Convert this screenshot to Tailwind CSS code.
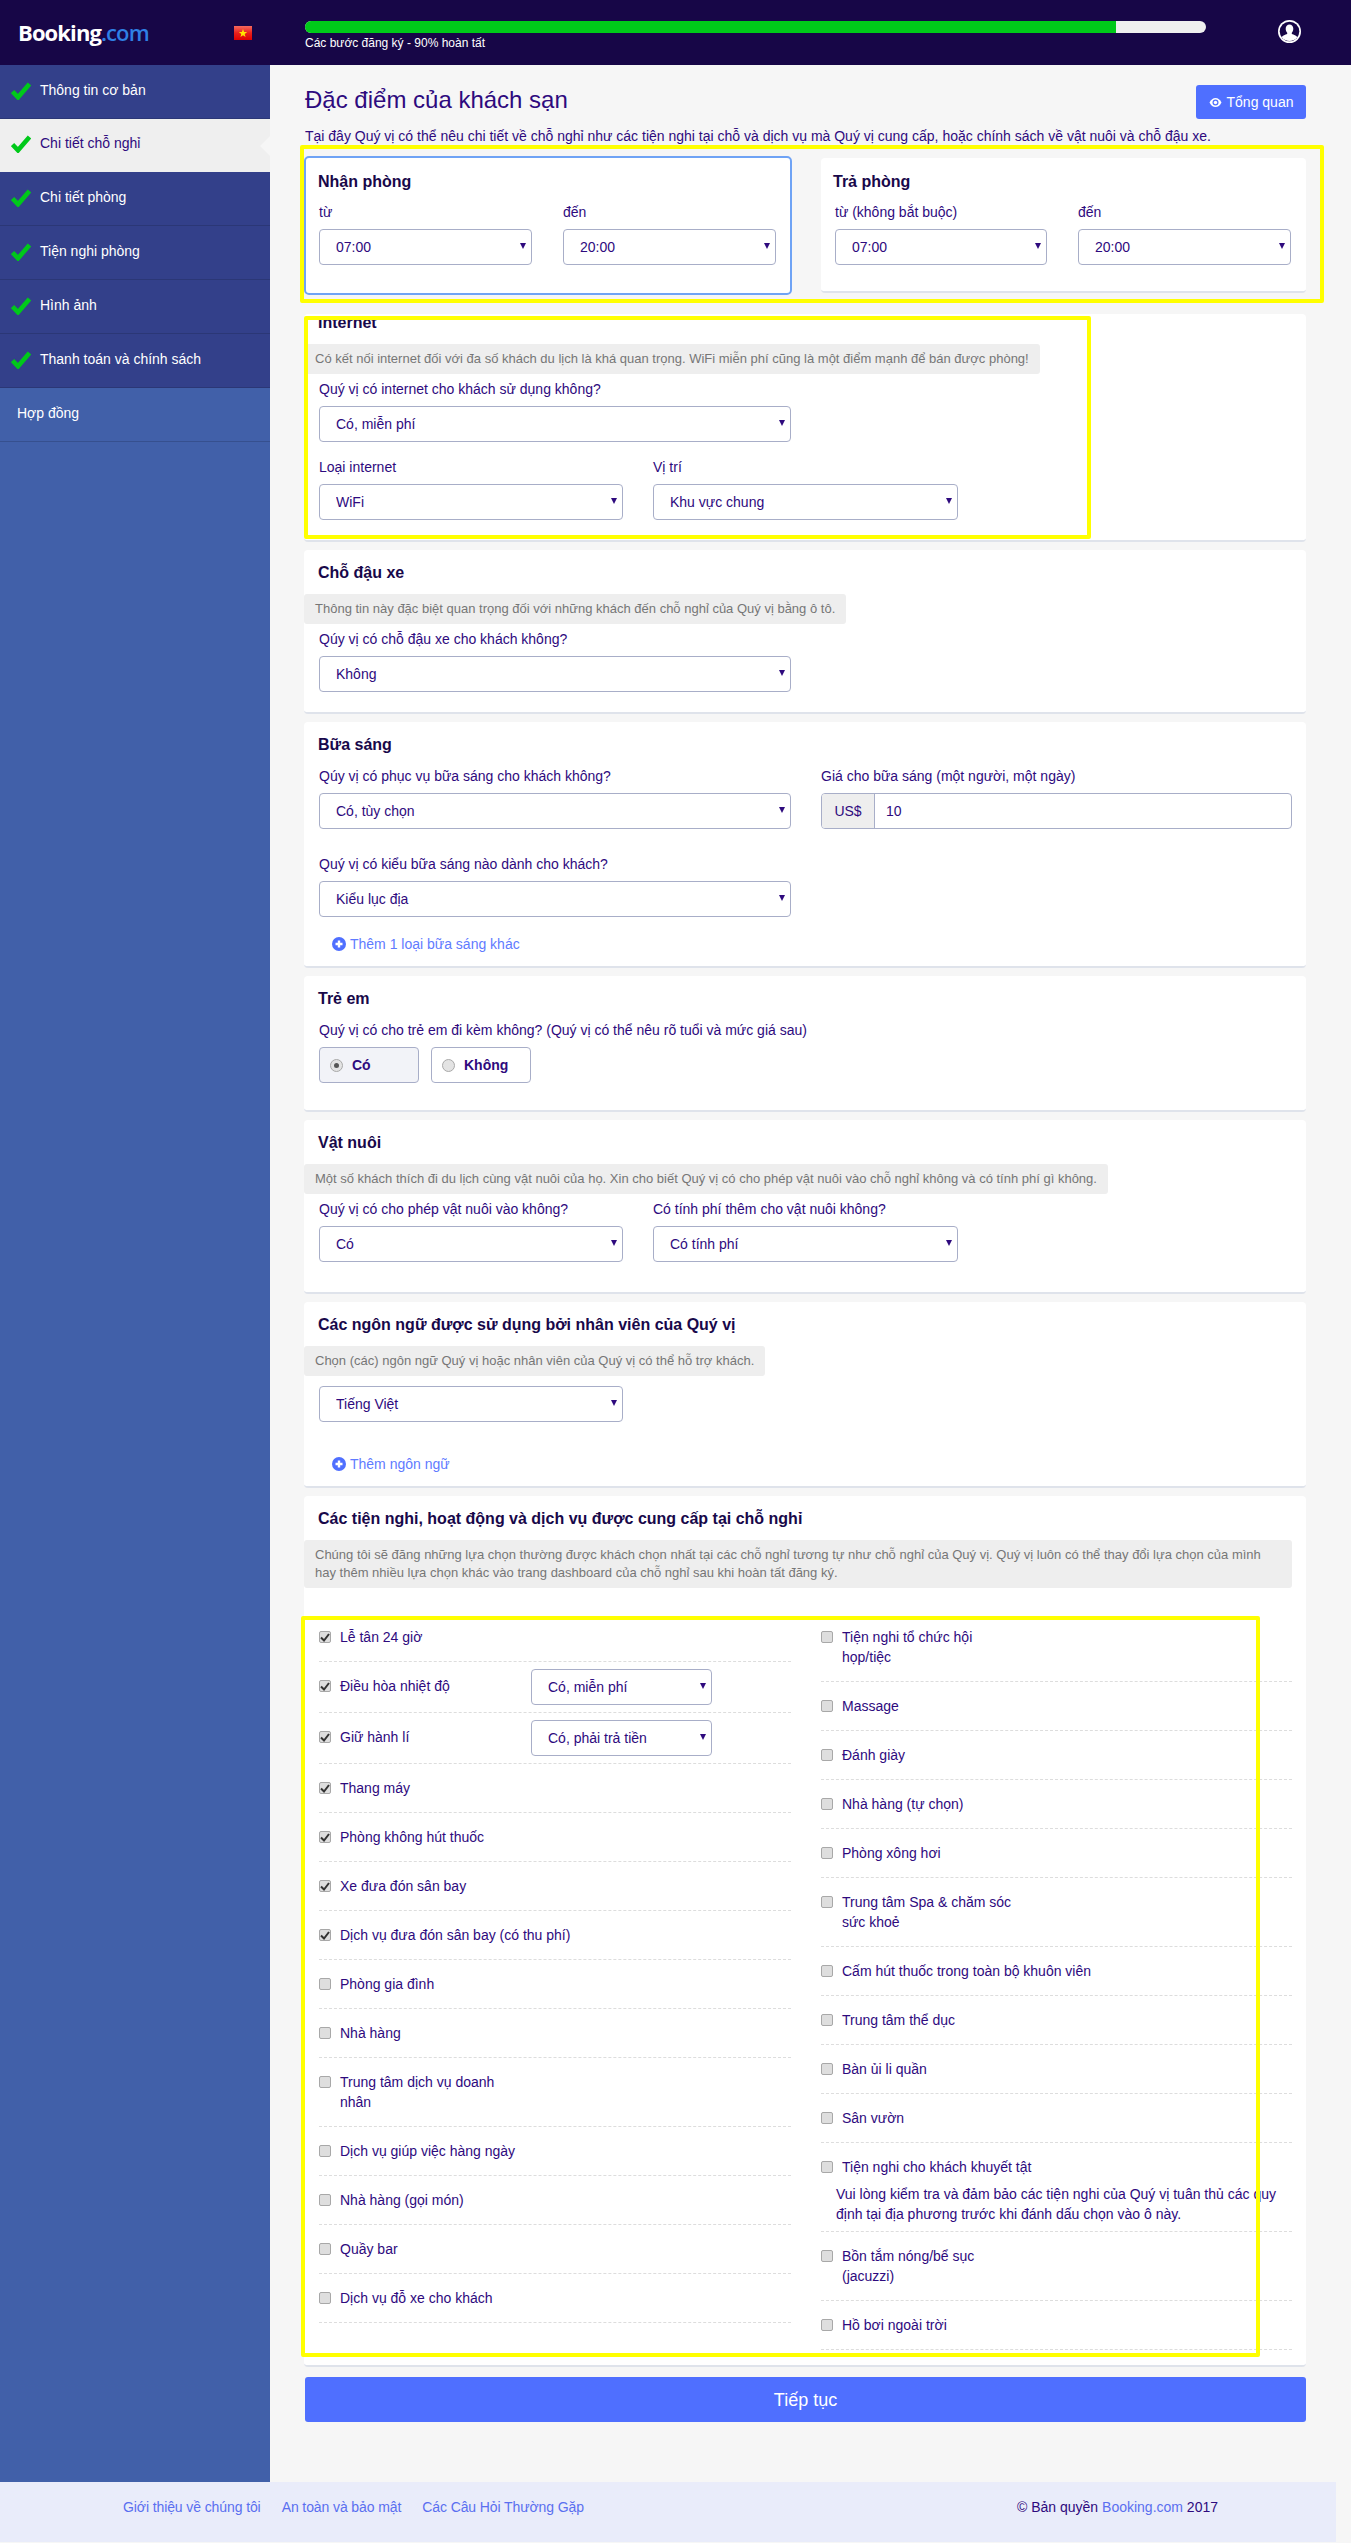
<!DOCTYPE html>
<html>
  <head>
    <meta charset="UTF-8" />
    <meta name="viewport" content="width=device-width, initial-scale=1.0" />
    <title>Đặc điểm của khách sạn</title>
    <script src="https://cdn.jsdelivr.net/npm/@tailwindcss/browser@4"></script>
  </head>
  <body class="relative flex flex-col w-[1351px] h-[2543px] bg-[#f6f6f6] font-['Liberation_Sans',Arial,sans-serif] text-[14px] leading-[20px] text-[#2e0a7e] overflow-hidden">
    <!-- header -->
    <header class="flex items-start h-[65px] bg-[#170647] shrink-0">
      <div class="w-[234px] shrink-0 pl-[18px] pt-[17px] font-['Open_Sans',sans-serif] font-bold text-[22px] leading-[30px] tracking-[-0.9px] text-white">Booking<span class="text-[#2f80e4] font-semibold">.com</span></div>
      <svg class="w-[18px] h-[14px] mt-[26px] shrink-0" viewBox="0 0 18 14">
        <defs><linearGradient id="fl" x1="0" y1="0" x2="0" y2="1"><stop offset="0" stop-color="#f56a5e"/><stop offset=".5" stop-color="#e8201c"/><stop offset="1" stop-color="#e00000"/></linearGradient></defs>
        <rect width="18" height="14" fill="url(#fl)"/>
        <path d="M9 3l1.100 3h3.100l-2.500 1.900.9 3.100L9 9.200 6.400 11l.9-3.100L4.800 6h3.100z" fill="#ffe600"/>
      </svg>
      <div class="w-[901px] ml-[53px] pt-[21px] shrink-0">
        <div class="h-[12px] bg-[#efefef] rounded-[6px] overflow-hidden"><div class="h-full w-[811px] bg-[#00c91a]"></div></div>
        <div class="mt-[1px] text-[12px] leading-[18px] text-white">Các bước đăng ký - 90% hoàn tất</div>
      </div>
      <svg class="w-[23px] h-[23px] ml-[72px] mt-[20px] shrink-0" viewBox="0 0 23 23">
        <circle cx="11.500" cy="11.500" r="11.500" fill="#fff"/>
        <circle cx="11.500" cy="11.500" r="9.800" fill="#170647"/>
        <path d="M11.500 4.500c2.300 0 3.800 1.800 3.800 4.300 0 1.700-.7 3.100-1.500 3.900v1.300c2 .7 4.500 1.500 5.500 3.200a9.800 9.800 0 0 1-15.600 0c1-1.700 3.500-2.500 5.500-3.200v-1.300c-.8-.8-1.500-2.200-1.500-3.900 0-2.500 1.500-4.300 3.800-4.300z" fill="#fff"/>
      </svg>
    </header>

    <div class="flex flex-1">
      <!-- sidebar -->
      <aside class="w-[270px] shrink-0 bg-[#4160a9] text-white">
        <a class="flex items-start h-[54px] bg-[#33408a] border-b border-[#2b3776] pl-[11px] pt-[15px] gap-[9px]"><svg class="w-[20px] h-[18px] mt-[2px]" viewBox="0 0 20 18"><path d="M1.500 9.500l5.500 5.800L18.500 2" fill="none" stroke="#00c91a" stroke-width="4.600"/></svg>Thông tin cơ bản</a>
        <a class="relative flex items-start h-[53px] bg-[#efefef] text-[#2e0a7e] pl-[11px] pt-[14px] gap-[9px]"><svg class="w-[20px] h-[18px] mt-[2px]" viewBox="0 0 20 18"><path d="M1.500 9.500l5.500 5.800L18.500 2" fill="none" stroke="#00c91a" stroke-width="4.600"/></svg>Chi tiết chỗ nghỉ<span class="absolute right-0 top-[17px] border-y-[10px] border-r-[10px] border-y-transparent border-r-[#f6f6f6]"></span></a>
        <a class="flex items-start h-[54px] bg-[#33408a] border-b border-[#2b3776] pl-[11px] pt-[15px] gap-[9px]"><svg class="w-[20px] h-[18px] mt-[2px]" viewBox="0 0 20 18"><path d="M1.500 9.500l5.500 5.800L18.500 2" fill="none" stroke="#00c91a" stroke-width="4.600"/></svg>Chi tiết phòng</a>
        <a class="flex items-start h-[54px] bg-[#33408a] border-b border-[#2b3776] pl-[11px] pt-[15px] gap-[9px]"><svg class="w-[20px] h-[18px] mt-[2px]" viewBox="0 0 20 18"><path d="M1.500 9.500l5.500 5.800L18.500 2" fill="none" stroke="#00c91a" stroke-width="4.600"/></svg>Tiện nghi phòng</a>
        <a class="flex items-start h-[54px] bg-[#33408a] border-b border-[#2b3776] pl-[11px] pt-[15px] gap-[9px]"><svg class="w-[20px] h-[18px] mt-[2px]" viewBox="0 0 20 18"><path d="M1.500 9.500l5.500 5.800L18.500 2" fill="none" stroke="#00c91a" stroke-width="4.600"/></svg>Hình ảnh</a>
        <a class="flex items-start h-[54px] bg-[#33408a] border-b border-[#2b3776] pl-[11px] pt-[15px] gap-[9px]"><svg class="w-[20px] h-[18px] mt-[2px]" viewBox="0 0 20 18"><path d="M1.500 9.500l5.500 5.800L18.500 2" fill="none" stroke="#00c91a" stroke-width="4.600"/></svg>Thanh toán và chính sách</a>
        <a class="block h-[54px] border-b border-[#36508f] pl-[17px] pt-[15px]">Hợp đồng</a>
      </aside>

      <!-- main -->
      <main class="flex-1 pl-[34px] pr-[45px] pt-[20px]">
        <div class="flex justify-between items-start pl-px">
          <h1 class="text-[24px] leading-[30px]">Đặc điểm của khách sạn</h1>
          <button class="flex items-center justify-center gap-[5px] w-[110px] h-[34px] rounded-[3px] bg-[#4f6fff] text-white">
            <svg class="w-[13px] h-[11px]" viewBox="0 0 13 11"><path d="M.5 5.500C2 2.500 4 1 6.500 1s4.500 1.500 6 4.500c-1.500 3-3.500 4.500-6 4.500S2 8.500.5 5.500z" fill="#fff"/><circle cx="6.500" cy="5.500" r="3" fill="#4f6fff"/><circle cx="6.500" cy="5.500" r="1.700" fill="#fff"/></svg>
            Tổng quan
          </button>
        </div>
        <p class="mt-[7px] pl-px">Tại đây Quý vị có thể nêu chi tiết về chỗ nghỉ như các tiện nghi tại chỗ và dịch vụ mà Quý vị cung cấp, hoặc chính sách về vật nuôi và chỗ đậu xe.</p>

        <!-- check in / out -->
        <div class="flex gap-[29px] mt-[10px]">
          <section class="w-[488px] h-[139px] bg-white border-2 border-[#6fa3f5] rounded-[5px] pl-[13px] pt-[14px]">
            <h2 class="-ml-px font-bold text-[16px] text-[#18084a]">Nhận phòng</h2>
            <div class="grid grid-cols-[213px_213px] gap-x-[31px] mt-[10px]">
              <div>
                <label class="block">từ</label>
                <div class="relative mt-[7px]"><select class="w-full h-[36px] appearance-none bg-white border border-[#a8aec8] rounded-[4px] pl-[16px]"><option>07:00</option></select><svg class="absolute right-[6px] top-[14px] w-[6px] h-[6px] pointer-events-none" viewBox="0 0 7 7"><path d="M0 0h7L3.500 7z" fill="#2e0a7e"/></svg></div>
              </div>
              <div>
                <label class="block">đến</label>
                <div class="relative mt-[7px]"><select class="w-full h-[36px] appearance-none bg-white border border-[#a8aec8] rounded-[4px] pl-[16px]"><option>20:00</option></select><svg class="absolute right-[6px] top-[14px] w-[6px] h-[6px] pointer-events-none" viewBox="0 0 7 7"><path d="M0 0h7L3.500 7z" fill="#2e0a7e"/></svg></div>
              </div>
            </div>
          </section>
          <section class="w-[485px] h-[135px] mt-[2px] bg-white border-b-2 border-[#dfe3eb] rounded-[4px] pl-[14px] pt-[14px]">
            <h2 class="-ml-[2px] font-bold text-[16px] text-[#18084a]">Trả phòng</h2>
            <div class="grid grid-cols-[212px_213px] gap-x-[31px] mt-[10px]">
              <div>
                <label class="block">từ (không bắt buộc)</label>
                <div class="relative mt-[7px]"><select class="w-full h-[36px] appearance-none bg-white border border-[#a8aec8] rounded-[4px] pl-[16px]"><option>07:00</option></select><svg class="absolute right-[6px] top-[14px] w-[6px] h-[6px] pointer-events-none" viewBox="0 0 7 7"><path d="M0 0h7L3.500 7z" fill="#2e0a7e"/></svg></div>
              </div>
              <div>
                <label class="block">đến</label>
                <div class="relative mt-[7px]"><select class="w-full h-[36px] appearance-none bg-white border border-[#a8aec8] rounded-[4px] pl-[16px]"><option>20:00</option></select><svg class="absolute right-[6px] top-[14px] w-[6px] h-[6px] pointer-events-none" viewBox="0 0 7 7"><path d="M0 0h7L3.500 7z" fill="#2e0a7e"/></svg></div>
              </div>
            </div>
          </section>
        </div>

        <!-- internet -->
        <section class="mt-[19px] h-[228px] bg-white border-b-2 border-[#dfe3eb] rounded-[4px]">
          <h2 class="pl-[14px] font-bold text-[16px] leading-[18px] text-[#18084a]">Internet</h2>
          <p class="mt-[12px] w-fit px-[11px] h-[30px] leading-[30px] text-[13px] text-[#767676] bg-[#eeeeee] rounded-[3px]">Có kết nối internet đối với đa số khách du lịch là khá quan trọng. WiFi miễn phí cũng là một điểm mạnh để bán được phòng!</p>
          <div class="pl-[15px]">
            <label class="block mt-[5px]">Quý vị có internet cho khách sử dụng không?</label>
            <div class="relative mt-[7px] w-[472px]"><select class="w-full h-[36px] appearance-none bg-white border border-[#a8aec8] rounded-[4px] pl-[16px]"><option>Có, miễn phí</option></select><svg class="absolute right-[6px] top-[14px] w-[6px] h-[6px] pointer-events-none" viewBox="0 0 7 7"><path d="M0 0h7L3.500 7z" fill="#2e0a7e"/></svg></div>
            <div class="grid grid-cols-[304px_305px] gap-x-[30px] mt-[15px]">
              <div>
                <label class="block">Loại internet</label>
                <div class="relative mt-[7px]"><select class="w-full h-[36px] appearance-none bg-white border border-[#a8aec8] rounded-[4px] pl-[16px]"><option>WiFi</option></select><svg class="absolute right-[6px] top-[14px] w-[6px] h-[6px] pointer-events-none" viewBox="0 0 7 7"><path d="M0 0h7L3.500 7z" fill="#2e0a7e"/></svg></div>
              </div>
              <div>
                <label class="block">Vị trí</label>
                <div class="relative mt-[7px]"><select class="w-full h-[36px] appearance-none bg-white border border-[#a8aec8] rounded-[4px] pl-[16px]"><option>Khu vực chung</option></select><svg class="absolute right-[6px] top-[14px] w-[6px] h-[6px] pointer-events-none" viewBox="0 0 7 7"><path d="M0 0h7L3.500 7z" fill="#2e0a7e"/></svg></div>
              </div>
            </div>
          </div>
        </section>

        <!-- parking -->
        <section class="mt-[8px] h-[164px] bg-white border-b-2 border-[#dfe3eb] rounded-[4px] pt-[13px]">
          <h2 class="pl-[14px] font-bold text-[16px] text-[#18084a]">Chỗ đậu xe</h2>
          <p class="mt-[11px] w-fit px-[11px] h-[30px] leading-[30px] text-[13px] text-[#767676] bg-[#eeeeee] rounded-[3px]">Thông tin này đặc biệt quan trọng đối với những khách đến chỗ nghỉ của Quý vị bằng ô tô.</p>
          <div class="pl-[15px]">
            <label class="block mt-[5px]">Qúy vị có chỗ đậu xe cho khách không?</label>
            <div class="relative mt-[7px] w-[472px]"><select class="w-full h-[36px] appearance-none bg-white border border-[#a8aec8] rounded-[4px] pl-[16px]"><option>Không</option></select><svg class="absolute right-[6px] top-[14px] w-[6px] h-[6px] pointer-events-none" viewBox="0 0 7 7"><path d="M0 0h7L3.500 7z" fill="#2e0a7e"/></svg></div>
          </div>
        </section>

        <!-- breakfast -->
        <section class="mt-[8px] h-[246px] bg-white border-b-2 border-[#dfe3eb] rounded-[4px] pt-[13px]">
          <h2 class="pl-[14px] font-bold text-[16px] text-[#18084a]">Bữa sáng</h2>
          <div class="grid grid-cols-[472px_471px] gap-x-[30px] pl-[15px] mt-[11px]">
            <div>
              <label class="block">Qúy vị có phục vụ bữa sáng cho khách không?</label>
              <div class="relative mt-[7px]"><select class="w-full h-[36px] appearance-none bg-white border border-[#a8aec8] rounded-[4px] pl-[16px]"><option>Có, tùy chọn</option></select><svg class="absolute right-[6px] top-[14px] w-[6px] h-[6px] pointer-events-none" viewBox="0 0 7 7"><path d="M0 0h7L3.500 7z" fill="#2e0a7e"/></svg></div>
            </div>
            <div>
              <label class="block">Giá cho bữa sáng (một người, một ngày)</label>
              <div class="flex mt-[7px] h-[36px] border border-[#a8aec8] rounded-[4px] overflow-hidden">
                <span class="w-[53px] bg-[#eeeeee] border-r border-[#a8aec8] text-center leading-[34px]">US$</span>
                <input class="flex-1 pl-[11px]" value="10" />
              </div>
            </div>
          </div>
          <div class="pl-[15px] mt-[25px]">
            <label class="block">Quý vị có kiểu bữa sáng nào dành cho khách?</label>
            <div class="relative mt-[7px] w-[472px]"><select class="w-full h-[36px] appearance-none bg-white border border-[#a8aec8] rounded-[4px] pl-[16px]"><option>Kiểu lục địa</option></select><svg class="absolute right-[6px] top-[14px] w-[6px] h-[6px] pointer-events-none" viewBox="0 0 7 7"><path d="M0 0h7L3.500 7z" fill="#2e0a7e"/></svg></div>
          </div>
          <a class="flex items-center gap-[4px] ml-[28px] mt-[17px] text-[#5f7bff]"><svg class="w-[14px] h-[14px]" viewBox="0 0 14 14"><circle cx="7" cy="7" r="7" fill="#4f6fff"/><path d="M7 3.500v7M3.500 7h7" stroke="#fff" stroke-width="2.400"/></svg>Thêm 1 loại bữa sáng khác</a>
        </section>

        <!-- children -->
        <section class="mt-[8px] h-[136px] bg-white border-b-2 border-[#dfe3eb] rounded-[4px] pt-[13px]">
          <h2 class="pl-[14px] font-bold text-[16px] text-[#18084a]">Trẻ em</h2>
          <div class="pl-[15px] mt-[11px]">
            <label class="block">Quý vị có cho trẻ em đi kèm không? (Quý vị có thể nêu rõ tuổi và mức giá sau)</label>
            <div class="flex gap-[12px] mt-[7px]">
              <span class="flex items-center gap-[9px] w-[100px] h-[36px] pl-[10px] bg-[#f2f3f8] border border-[#a8aec8] rounded-[4px] font-bold"><span class="flex items-center justify-center w-[13px] h-[13px] rounded-full bg-[#e3e3e3] border border-[#a9a9a9]"><span class="w-[5px] h-[5px] rounded-full bg-[#555555]"></span></span>Có</span>
              <span class="flex items-center gap-[9px] w-[100px] h-[36px] pl-[10px] bg-white border border-[#a8aec8] rounded-[4px] font-bold"><span class="w-[13px] h-[13px] rounded-full bg-[#e3e3e3] border border-[#a9a9a9]"></span>Không</span>
            </div>
          </div>
        </section>

        <!-- pets -->
        <section class="mt-[8px] h-[174px] bg-white border-b-2 border-[#dfe3eb] rounded-[4px] pt-[13px]">
          <h2 class="pl-[14px] font-bold text-[16px] text-[#18084a]">Vật nuôi</h2>
          <p class="mt-[11px] w-fit px-[11px] h-[30px] leading-[30px] text-[13px] text-[#767676] bg-[#eeeeee] rounded-[3px]">Một số khách thích đi du lịch cùng vật nuôi của họ. Xin cho biết Quý vị có cho phép vật nuôi vào chỗ nghỉ không và có tính phí gì không.</p>
          <div class="grid grid-cols-[304px_305px] gap-x-[30px] pl-[15px] mt-[5px]">
            <div>
              <label class="block">Quý vị có cho phép vật nuôi vào không?</label>
              <div class="relative mt-[7px]"><select class="w-full h-[36px] appearance-none bg-white border border-[#a8aec8] rounded-[4px] pl-[16px]"><option>Có</option></select><svg class="absolute right-[6px] top-[14px] w-[6px] h-[6px] pointer-events-none" viewBox="0 0 7 7"><path d="M0 0h7L3.500 7z" fill="#2e0a7e"/></svg></div>
            </div>
            <div>
              <label class="block">Có tính phí thêm cho vật nuôi không?</label>
              <div class="relative mt-[7px]"><select class="w-full h-[36px] appearance-none bg-white border border-[#a8aec8] rounded-[4px] pl-[16px]"><option>Có tính phí</option></select><svg class="absolute right-[6px] top-[14px] w-[6px] h-[6px] pointer-events-none" viewBox="0 0 7 7"><path d="M0 0h7L3.500 7z" fill="#2e0a7e"/></svg></div>
            </div>
          </div>
        </section>

        <!-- languages -->
        <section class="mt-[8px] h-[186px] bg-white border-b-2 border-[#dfe3eb] rounded-[4px] pt-[13px]">
          <h2 class="pl-[14px] font-bold text-[16px] text-[#18084a]">Các ngôn ngữ được sử dụng bởi nhân viên của Quý vị</h2>
          <p class="mt-[11px] w-fit px-[11px] h-[30px] leading-[30px] text-[13px] text-[#767676] bg-[#eeeeee] rounded-[3px]">Chọn (các) ngôn ngữ Quý vị hoặc nhân viên của Quý vị có thể hỗ trợ khách.</p>
          <div class="relative mt-[10px] ml-[15px] w-[304px]"><select class="w-full h-[36px] appearance-none bg-white border border-[#a8aec8] rounded-[4px] pl-[16px]"><option>Tiếng Việt</option></select><svg class="absolute right-[6px] top-[14px] w-[6px] h-[6px] pointer-events-none" viewBox="0 0 7 7"><path d="M0 0h7L3.500 7z" fill="#2e0a7e"/></svg></div>
          <a class="flex items-center gap-[4px] ml-[28px] mt-[32px] text-[#5f7bff]"><svg class="w-[14px] h-[14px]" viewBox="0 0 14 14"><circle cx="7" cy="7" r="7" fill="#4f6fff"/><path d="M7 3.500v7M3.500 7h7" stroke="#fff" stroke-width="2.400"/></svg>Thêm ngôn ngữ</a>
        </section>

        <!-- amenities -->
        <section class="mt-[8px] h-[871px] bg-white border-b-2 border-[#dfe3eb] rounded-[4px] pt-[13px]">
          <h2 class="pl-[14px] font-bold text-[16px] text-[#18084a]">Các tiện nghi, hoạt động và dịch vụ được cung cấp tại chỗ nghỉ</h2>
          <p class="mt-[11px] w-[988px] px-[11px] py-[6px] leading-[18px] text-[13px] text-[#767676] bg-[#eeeeee] rounded-[3px]">Chúng tôi sẽ đăng những lựa chọn thường được khách chọn nhất tại các chỗ nghỉ tương tự như chỗ nghỉ của Quý vị. Quý vị luôn có thể thay đổi lựa chọn của mình hay thêm nhiều lựa chọn khác vào trang dashboard của chỗ nghỉ sau khi hoàn tất đăng ký.</p>
          <div class="grid grid-cols-[472px_471px] gap-x-[30px] pl-[15px] mt-[25px]">
            <div id="col-left"></div>
            <div id="col-right"></div>
          </div>
        </section>

        <button class="block w-[1001px] h-[45px] ml-px mt-[10px] rounded-[3px] bg-[#4f6fff] text-white text-[18px]">Tiếp tục</button>
      </main>
    </div>

    <footer class="flex items-start w-[1336px] h-[60px] mb-px shrink-0 bg-[#e9ecfa]">
      <div class="flex gap-[21px] pl-[123px] pt-[15px] w-[1017px] text-[#5a6ff0] tracking-[-0.1px]">
        <a>Giới thiệu về chúng tôi</a><a>An toàn và bảo mật</a><a>Các Câu Hỏi Thường Gặp</a>
      </div>
      <div class="pt-[15px]">© Bản quyền <a class="text-[#5a6ff0]">Booking.com</a> 2017</div>
    </footer>

    <!-- yellow annotation frames -->
    <div class="absolute left-[300px] top-[145px] w-[1024px] h-[158px] border-4 border-[#ffff00] rounded-[2px] pointer-events-none"></div>
    <div class="absolute left-[304px] top-[316px] w-[787px] h-[223px] border-4 border-[#ffff00] rounded-[2px] pointer-events-none"></div>
    <div class="absolute left-[301px] top-[1616px] w-[959px] h-[741px] border-4 border-[#ffff00] rounded-[2px] pointer-events-none"></div>

    <script>
      const chk = '<svg class="w-[10px] h-[9px]" viewBox="0 0 10 9"><path d="M1 4.500l3 3L9 1" fill="none" stroke="#333" stroke-width="2"/></svg>';
      const arrow = '<svg class="absolute right-[6px] top-[14px] w-[6px] h-[6px] pointer-events-none" viewBox="0 0 7 7"><path d="M0 0h7L3.500 7z" fill="#2e0a7e"/></svg>';

      function row(text, on) {
        return `<div class="flex gap-[9px] pt-[14px] pb-[14px] border-b border-dashed border-[#dddddd]">
          <span class="flex items-center justify-center w-[12px] h-[12px] mt-[4px] shrink-0 rounded-[2px] bg-[#dedede] border border-[#a8a8a8]">${on ? chk : ""}</span>
          <span>${text}</span></div>`;
      }
      function rowSelect(text, value) {
        return `<div class="flex py-[7px] border-b border-dashed border-[#dddddd]">
          <span class="flex items-center justify-center w-[12px] h-[12px] mt-[11px] shrink-0 rounded-[2px] bg-[#dedede] border border-[#a8a8a8]">${chk}</span>
          <span class="w-[191px] ml-[9px] pt-[7px] shrink-0">${text}</span>
          <div class="relative w-[181px]"><select class="w-full h-[36px] appearance-none bg-white border border-[#a8aec8] rounded-[4px] pl-[16px]"><option>${value}</option></select>${arrow}</div></div>`;
      }

      document.getElementById("col-left").innerHTML = [
        row("Lễ tân 24 giờ", true),
        rowSelect("Điều hòa nhiệt độ", "Có, miễn phí"),
        rowSelect("Giữ hành lí", "Có, phải trả tiền"),
        row("Thang máy", true),
        row("Phòng không hút thuốc", true),
        row("Xe đưa đón sân bay", true),
        row("Dịch vụ đưa đón sân bay (có thu phí)", true),
        row("Phòng gia đình"),
        row("Nhà hàng"),
        row("Trung tâm dịch vụ doanh<br>nhân"),
        row("Dịch vụ giúp việc hàng ngày"),
        row("Nhà hàng (gọi món)"),
        row("Quầy bar"),
        row("Dịch vụ đỗ xe cho khách"),
      ].join("");

      document.getElementById("col-right").innerHTML = [
        row("Tiện nghi tổ chức hội<br>họp/tiệc"),
        row("Massage"),
        row("Đánh giày"),
        row("Nhà hàng (tự chọn)"),
        row("Phòng xông hơi"),
        row("Trung tâm Spa &amp; chăm sóc<br>sức khoẻ"),
        row("Cấm hút thuốc trong toàn bộ khuôn viên"),
        row("Trung tâm thể dục"),
        row("Bàn ủi li quần"),
        row("Sân vườn"),
        `<div class="pt-[14px] pb-[7px] border-b border-dashed border-[#dddddd]">
          <div class="flex gap-[9px]"><span class="w-[12px] h-[12px] mt-[4px] shrink-0 rounded-[2px] bg-[#dedede] border border-[#a8a8a8]"></span><span>Tiện nghi cho khách khuyết tật</span></div>
          <p class="mt-[7px] ml-[15px] w-[445px]">Vui lòng kiểm tra và đảm bảo các tiện nghi của Quý vị tuân thủ các quy định tại địa phương trước khi đánh dấu chọn vào ô này.</p></div>`,
        row("Bồn tắm nóng/bể sục<br>(jacuzzi)"),
        row("Hồ bơi ngoài trời"),
      ].join("");
    </script>
  </body>
</html>
